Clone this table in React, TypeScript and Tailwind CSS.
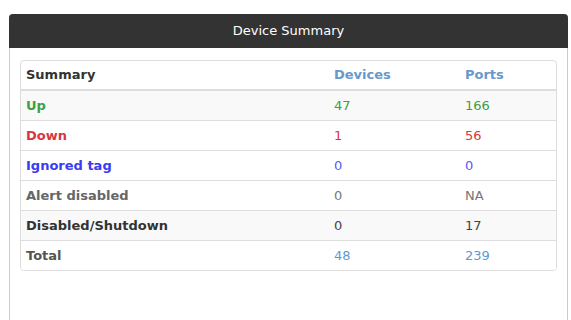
import React from 'react';

type Row = {
  label: string;
  labelColor: string;
  devices: string;
  ports: string;
  numColor: string;
  striped?: boolean;
};

const rows: Row[] = [
  { label: 'Up', labelColor: 'text-[#3d9f3d]', devices: '47', ports: '166', numColor: 'text-[#3d9f3d]', striped: true },
  { label: 'Down', labelColor: 'text-[#d9363e]', devices: '1', ports: '56', numColor: 'text-[#d9363e]' },
  { label: 'Ignored tag', labelColor: 'text-[#3b3bf0]', devices: '0', ports: '0', numColor: 'text-[#5a5af5]' },
  { label: 'Alert disabled', labelColor: 'text-[#666666]', devices: '0', ports: 'NA', numColor: 'text-[#777777]' },
  { label: 'Disabled/Shutdown', labelColor: 'text-[#333333]', devices: '0', ports: '17', numColor: 'text-[#444444]', striped: true },
  { label: 'Total', labelColor: 'text-[#555555]', devices: '48', ports: '239', numColor: 'text-[#5f98cf]' },
];

export default function App() {
  return (
    <div className="w-[571px] h-[320px] overflow-hidden bg-white pt-[14px] pl-[9px] pr-[3px] font-['DejaVu_Sans',Verdana,sans-serif] text-[13px]">
      <div className="w-[559px] h-[340px] border-x border-[#cccccc] rounded-t-[4px]">
        {/* Header */}
        <div className="h-[34px] -mx-px bg-[#333333] rounded-t-[4px] flex items-center justify-center text-white">
          Device Summary
        </div>

        {/* Table card */}
        <div className="mt-[12px] ml-[10px] w-[537px] border border-[#dddddd] rounded-[4px] overflow-hidden">
          <div className="flex h-[30px] items-center border-b-2 border-[#dddddd] font-bold">
            <div className="w-[309px] pl-[5px] text-[#333333]">Summary</div>
            <div className="w-[131px] pl-[4px] text-[#6699cc]">Devices</div>
            <div className="flex-1 pl-[4px] text-[#6699cc]">Ports</div>
          </div>
          {rows.map((r, i) => (
            <div
              key={r.label}
              className={`flex items-center ${i === 0 ? 'h-[29px]' : 'h-[30px] border-t border-[#dddddd]'} ${r.striped ? 'bg-[#f9f9f9]' : 'bg-white'}`}
            >
              <div className={`w-[309px] pl-[5px] font-bold ${r.labelColor}`}>{r.label}</div>
              <div className={`w-[131px] pl-[4px] ${r.numColor}`}>{r.devices}</div>
              <div className={`flex-1 pl-[4px] ${r.numColor}`}>{r.ports}</div>
            </div>
          ))}
        </div>
      </div>
    </div>
  );
}
